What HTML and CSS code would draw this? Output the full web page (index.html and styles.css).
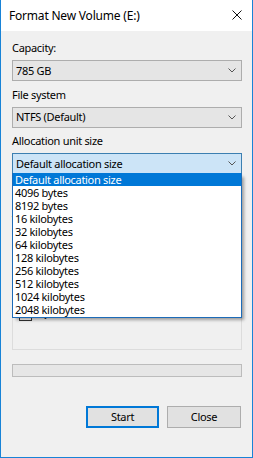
FILE: index.html
```html
<!DOCTYPE html>
<html>
<head>
<meta charset="utf-8">
<link rel="stylesheet" href="styles.css">
</head>
<body>
<div class="window">
  <div class="titlebar">
    <span class="title">Format New Volume (E:)</span>
    <svg class="close" width="10" height="10" viewBox="0 0 10 10"><path d="M0.5 0.5 L9.5 9.5 M9.5 0.5 L0.5 9.5" stroke="#111" stroke-width="1" fill="none"/></svg>
  </div>
  <div class="content">
    <div class="field">
      <div class="label">Capacity:</div>
      <div class="combo"><span>785 GB</span><svg class="chev" width="8" height="5" viewBox="0 0 8 5"><path d="M0.5 0.5 L4 4 L7.5 0.5" stroke="#555" fill="none"/></svg></div>
    </div>
    <div class="field next">
      <div class="label">File system</div>
      <div class="combo"><span>NTFS (Default)</span><svg class="chev" width="8" height="5" viewBox="0 0 8 5"><path d="M0.5 0.5 L4 4 L7.5 0.5" stroke="#555" fill="none"/></svg></div>
    </div>
    <div class="field next">
      <div class="label">Allocation unit size</div>
      <div class="combo open"><span>Default allocation size</span><svg class="chev" width="8" height="5" viewBox="0 0 8 5"><path d="M0.5 0.5 L4 4 L7.5 0.5" stroke="#555" fill="none"/></svg>
        <ul class="list">
          <li class="sel">Default allocation size</li>
          <li>4096 bytes</li>
          <li>8192 bytes</li>
          <li>16 kilobytes</li>
          <li>32 kilobytes</li>
          <li>64 kilobytes</li>
          <li>128 kilobytes</li>
          <li>256 kilobytes</li>
          <li>512 kilobytes</li>
          <li>1024 kilobytes</li>
          <li>2048 kilobytes</li>
        </ul>
      </div>
    </div>
    <div class="restore">Restore device defaults</div>
    <div class="label vol">Volume label</div>
    <div class="textbox">New Volume</div>
    <div class="group">
      <div class="legend">Format options</div>
      <div class="check"><span class="box"></span><span class="check-text">Quick Format</span></div>
    </div>
    <div class="progress"></div>
    <div class="buttons">
      <div class="btn default">Start</div>
      <div class="btn">Close</div>
    </div>
  </div>
</div>
</body>
</html>
```
FILE: styles.css
```css
html, body {
  margin: 0;
  padding: 0;
  background: #ffffff;
}
.window {
  width: 253px;
  height: 458px;
  box-sizing: border-box;
  border: 1px solid #1883d7;
  border-top: none;
  background: #f0f0f0;
  display: flex;
  flex-direction: column;
  font-family: "Noto Sans", "Open Sans", sans-serif;
  font-size: 11px;
  letter-spacing: -0.3px;
  color: #000;
  overflow: hidden;
}
.titlebar {
  height: 31px;
  flex: none;
  background: #ffffff;
  display: flex;
  align-items: center;
  padding-left: 8px;
}
.title {
  font-size: 12px;
  letter-spacing: -0.2px;
  line-height: 16px;
}
.close {
  margin-left: auto;
  margin-right: 10px;
  margin-top: -1px;
}
.content {
  padding: 9px 10px 0 11px;
  display: flex;
  flex-direction: column;
}
.field.next {
  margin-top: 5.5px;
}
.label {
  line-height: 16px;
  margin-bottom: 4px;
}
.combo {
  position: relative;
  height: 21px;
  box-sizing: border-box;
  border: 1px solid #adadad;
  background: #e5e5e5;
  display: flex;
  align-items: center;
  padding: 0 5px 0 3px;
  line-height: 16px;
}
.combo .chev {
  margin-left: auto;
}
.combo.open {
  background: #cce4f7;
  border-color: #3c7fb1;
}
.list {
  position: absolute;
  left: -1px;
  right: -1px;
  top: 100%;
  margin: 0;
  padding: 0;
  list-style: none;
  background: #ffffff;
  border: 1px solid #1c6bb8;
  border-top: none;
  box-shadow: 3px 3px 3px -1px rgba(0, 0, 0, 0.35);
  z-index: 5;
}
.list li {
  height: 13px;
  line-height: 13px;
  padding-left: 2px;
  white-space: nowrap;
}
.list li:last-child {
  height: 14px;
}
.list li.sel {
  background: #0078d7;
  color: #ffffff;
}
.restore {
  margin-top: 9px;
  height: 23px;
  border: 1px solid #adadad;
  background: #e1e1e1;
  box-sizing: border-box;
  display: flex;
  align-items: center;
  justify-content: center;
  width: 150px;
}
.label.vol {
  margin-top: 6px;
}
.textbox {
  height: 21px;
  box-sizing: border-box;
  border: 1px solid #7a7a7a;
  background: #fff;
  padding-left: 3px;
  line-height: 19px;
}
.group {
  margin-top: 9px;
  border: 1px solid #dcdcdc;
  height: 88px;
  box-sizing: border-box;
  position: relative;
  padding: 24px 0 0 6px;
}
.legend {
  position: absolute;
  top: -9px;
  left: 6px;
  background: #f0f0f0;
  padding: 0 2px;
  line-height: 16px;
}
.check {
  display: flex;
  align-items: flex-start;
  gap: 7px;
  margin-top: 18px;
  line-height: 16px;
}
.box {
  width: 13px;
  height: 13px;
  margin-top: 3px;
  box-sizing: border-box;
  border: 1px solid #333;
  background: #fff;
}
.progress {
  margin-top: 14px;
  height: 13px;
  box-sizing: border-box;
  border: 1px solid #bcbcbc;
  background: #e6e6e6;
}
.buttons {
  margin-top: 29px;
  margin-right: 1px;
  display: flex;
  justify-content: flex-end;
  gap: 8px;
}
.btn {
  width: 74px;
  height: 22px;
  box-sizing: border-box;
  border: 1px solid #adadad;
  background: #e1e1e1;
  display: flex;
  align-items: center;
  justify-content: center;
  line-height: 16px;
}
.btn.default {
  width: 73px;
  border: 2px solid #0078d7;
}
```
